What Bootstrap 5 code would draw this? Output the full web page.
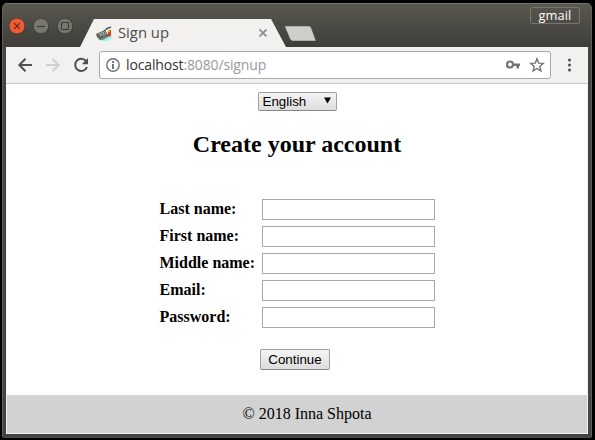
<!DOCTYPE html>
<html lang="en">
<head>
<meta charset="utf-8">
<meta name="viewport" content="width=device-width, initial-scale=1">
<title>Sign up</title>
<link rel="stylesheet" href="https://cdn.jsdelivr.net/npm/bootstrap@5.3.0/dist/css/bootstrap.min.css">
<style>
body{background:#000;height:440px;padding:3px 3px 2px 2px;font-family:"Liberation Serif",serif;color:#000}
.window{height:435px;background:#454440;border:1px solid #605e58;border-top-color:#77756c;border-bottom-color:#4b4a46;border-radius:5px 5px 2px 2px;padding:0 3px 3px}
.titlebar{height:43px;background:linear-gradient(#59574f,#3e3d39);margin:0 -3px;padding-left:6px;font-family:"Open Sans",sans-serif}
.controls{gap:8px;padding-top:14px}
.tab-shape{width:206px;height:28px;margin-left:3px;background:#f2f1f0;clip-path:polygon(14px 0,191px 0,206px 28px,0 28px);padding:0 15px 0 16px}
.tab-title{font-size:14.8px;line-height:26px;height:28px;color:#4c4c4c;margin-left:6px}
.new-tab{width:33px;height:15px;margin:0 0 6px -2px}
.gmail-tag{width:50px;height:17px;margin:3px 11px 0 auto;border:1px solid #77756d;border-radius:2px;color:#fff;font-size:12.8px;line-height:15px;letter-spacing:.1px}
.toolbar{height:37px;background:#f2f1f0;border-bottom:1px solid #c9c8c7;padding:4px 0 4px 11px}
.nav-icons{width:82px;padding-right:10px}
.address{width:452px;height:28px;border:1px solid #aaa;border-radius:3px;background:#fff;padding:0 5px 0 6px;font-family:"Open Sans",sans-serif;font-size:14px;line-height:26px}
.address-text{margin-left:6px;color:#999;white-space:nowrap;letter-spacing:-.14px}
.address-text b{font-weight:400;color:#333}
.page{height:350px;background:#fff;border:solid #f2f1f0;border-width:0 1px 1px}
.lang,.continue{font:13.333px/17px "Liberation Sans",sans-serif;color:#000;border:1px solid #a0a0a0;border-bottom-color:#888;border-radius:2px;background:linear-gradient(#f4f4f4,#ddd)}
.lang{width:79px;height:19px;margin-top:8px;padding:0 5px 0 4px}
.lang svg{margin-top:-2px}
.continue{width:70px;height:21px;margin:21px 4px 0 0;padding:0;line-height:19px}
.heading{font-size:24px;font-weight:700;line-height:28px;margin:19px 0 41px}
.fields{width:275px;row-gap:6px}
.fields label{width:102px;font-size:16px;line-height:19px;font-weight:700;height:21px;white-space:nowrap}
.fields input{width:173px;height:21px;border:1px solid #a9a9a9;padding:1px 2px;background:#fff;outline:0}
.copyright{height:38px;background:#d2d2d2;font-size:16px;line-height:37px;padding-left:20px}
svg{display:block;flex:none}
</style>
<script src="https://cdn.jsdelivr.net/npm/bootstrap@5.3.0/dist/js/bootstrap.bundle.min.js"></script>
</head>
<body class="m-0 overflow-hidden">
<div class="window overflow-hidden">
  <header class="titlebar d-flex">
    <div class="controls d-flex">
      <svg width="16" height="17" viewBox="0 0 16 17"><circle cx="8" cy="8" r="8" fill="#ef5a32" stroke="#393832" stroke-width=".8"/><path d="M5.2 5.2l5.6 5.6M10.8 5.2l-5.6 5.6" stroke="#5a2a16" stroke-width="1.2"/></svg>
      <svg width="16" height="17" viewBox="0 0 16 17"><circle cx="8" cy="8" r="7.7" fill="#77766f" stroke="#393832" stroke-width=".8"/><path d="M4 8.500h8" stroke="#383731"/></svg>
      <svg width="16" height="17" viewBox="0 0 16 17"><circle cx="8" cy="8" r="7.7" fill="#77766f" stroke="#393832" stroke-width=".8"/><path d="M4.500 4.500h7v7h-7z" fill="none" stroke="#383731"/></svg>
    </div>
    <div class="tab-wrap align-self-end ms-1">
      <div class="tab-shape d-flex align-items-center">
        <svg width="16" height="16" viewBox="0 0 16 16"><path d="M2 14l7-5 6-1 1 5-4 3H5z" fill="#9df3ee"/><path d="M0 9l9-4 4 6-9 4-3-3z" fill="#555e58"/><path d="M2 9l7-3 2 3-7 3z" fill="#9aa69c"/><path d="M3 10h1M6 9h1M5 11h1M8 8h1" stroke="#30362f"/><path d="M10 4l5-2M8 6l4-3" stroke="#50645a" stroke-width="1.500"/><path d="M12 5h3v6l-3 1z" fill="#e13d22"/><path d="M12 5h2v2h-2z" fill="#f0a22c"/><path d="M4 14l6-3 2 1-5 3z" fill="#79847c"/></svg>
        <span class="tab-title">Sign up</span>
        <svg class="ms-auto me-1" width="8" height="8" viewBox="0 0 8 8"><path d="M.5.5l7 7M7.500.5l-7 7" stroke="#8b8b8b" stroke-width="1.700"/></svg>
      </div>
    </div>
    <svg class="new-tab align-self-end" viewBox="0 0 33 15"><path d="M1 0h24l2 1 5 14H8l-2-2L.5 0z" fill="#cfcecb" stroke="#4a4944" stroke-width=".5"/></svg>
    <div class="gmail-tag text-center">gmail</div>
  </header>
  <nav class="toolbar d-flex align-items-center" aria-label="Browser">
    <div class="nav-icons d-flex justify-content-between">
      <svg width="16" height="16" viewBox="0 0 16 16"><path d="M15 8H2.500M8.500 1.800L2.300 8l6.200 6.200" fill="none" stroke="#505050" stroke-width="2"/></svg>
      <svg width="16" height="16" viewBox="0 0 16 16"><path d="M1 8h12.500M7.500 1.800L13.700 8l-6.200 6.200" fill="none" stroke="#d0d0d0" stroke-width="2"/></svg>
      <svg width="16" height="16" viewBox="0 0 16 16"><path d="M13 4A6.100 6.100 0 1 0 14 10" fill="none" stroke="#505050" stroke-width="2"/><path d="M15 1v6.200H8.800z" fill="#505050"/></svg>
    </div>
    <div class="address d-flex align-items-center">
      <svg width="14" height="14" viewBox="0 0 14 14"><circle cx="7" cy="7" r="6.200" fill="none" stroke="#6e6e6e" stroke-width="1.400"/><path d="M7 3v2M7 6v5" stroke="#666" stroke-width="1.800"/></svg>
      <span class="address-text"><b>localhost</b>:8080/signup</span>
      <svg class="ms-auto" width="15" height="10" viewBox="0 0 15 10"><circle cx="4" cy="4.500" r="3" fill="none" stroke="#747474" stroke-width="2.200"/><path d="M7 3.500h7v2.500H13v2.500h-2.500V6H7z" fill="#747474"/></svg>
      <svg class="ms-2 star" width="16" height="16" viewBox="0 0 16 16"><path d="M8 1.800l1.700 4.300 4.600.3-3.500 3 1.100 4.500L8 11.500l-3.900 2.400 1.100-4.500-3.500-3 4.600-.3z" fill="none" stroke="#747474" stroke-width="1.400"/></svg>
    </div>
    <svg class="ms-3" width="4" height="14" viewBox="0 0 4 14"><g fill="#505050"><circle cx="2.500" cy="2" r="1.500"/><circle cx="2.500" cy="7" r="1.500"/><circle cx="2.500" cy="12" r="1.500"/></g></svg>
  </nav>
  <main class="page d-flex flex-column align-items-center">
    <div class="lang d-flex align-items-center justify-content-between" role="button"><span>English</span><svg width="7" height="7" viewBox="0 0 7 7"><path d="M0 .5h7L3.500 6.500z"/></svg></div>
    <h2 class="heading">Create your account</h2>
    <form class="d-flex flex-column align-items-center">
      <div class="fields d-flex flex-column">
        <div class="d-flex"><label for="last">Last name:</label><input id="last"></div>
        <div class="d-flex"><label for="first">First name:</label><input id="first"></div>
        <div class="d-flex"><label for="middle">Middle name:</label><input id="middle"></div>
        <div class="d-flex"><label for="email">Email:</label><input id="email"></div>
        <div class="d-flex"><label for="password">Password:</label><input id="password" type="password"></div>
      </div>
      <button class="continue" type="button">Continue</button>
    </form>
    <footer class="copyright w-100 mt-auto text-center">© 2018 Inna Shpota</footer>
  </main>
</div>
</body>
</html>
